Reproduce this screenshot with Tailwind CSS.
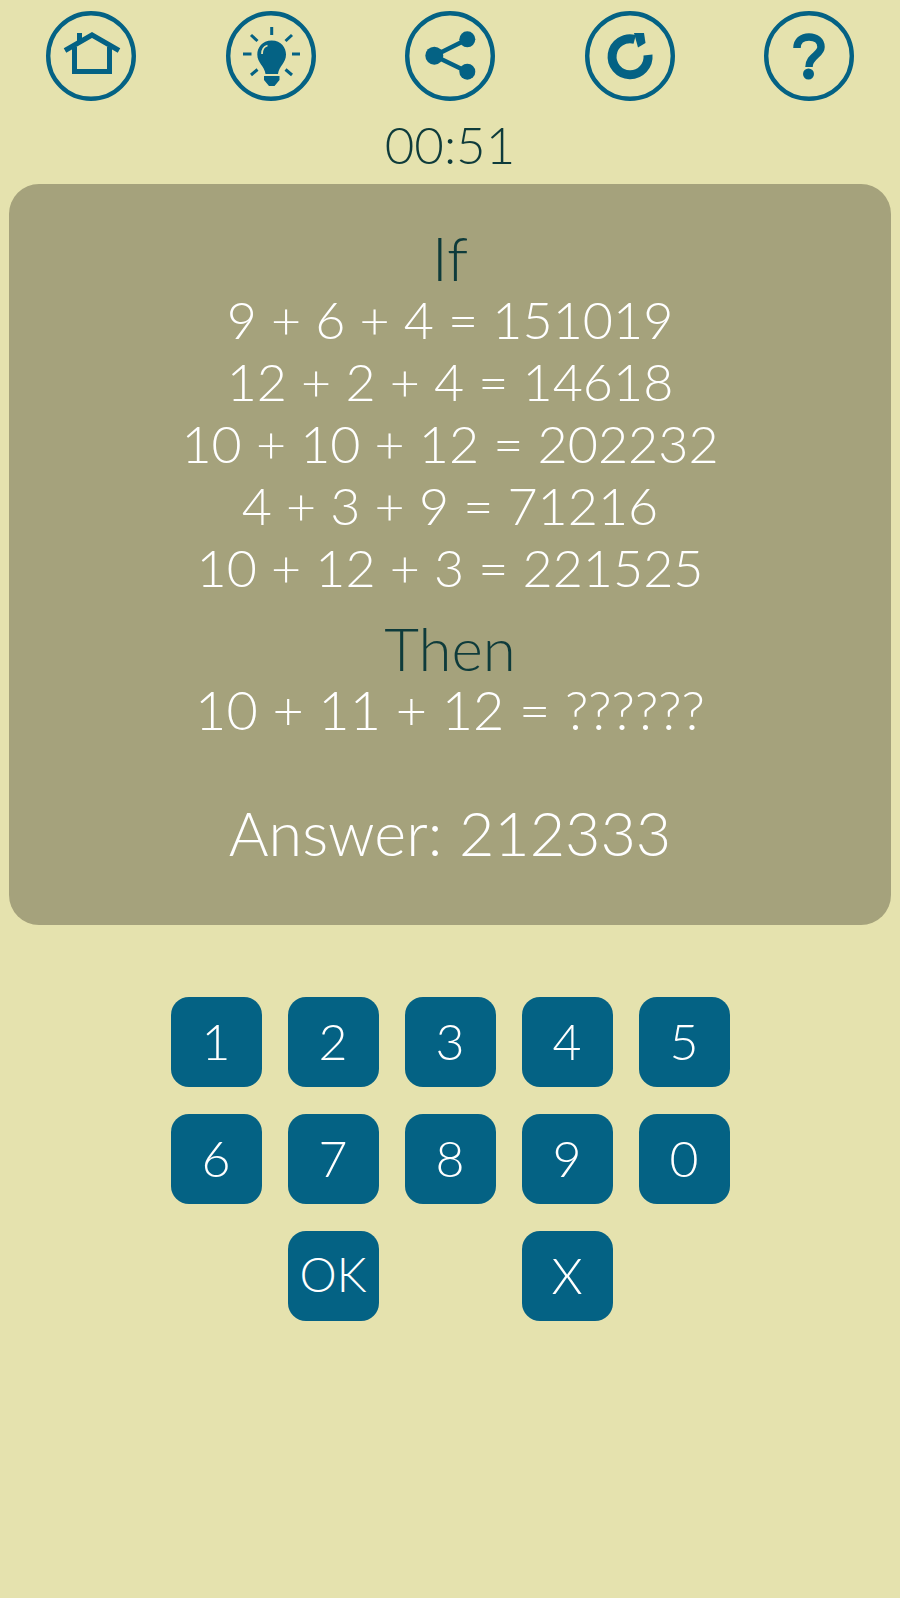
<!doctype html>
<html><head><meta charset="utf-8"><script src="https://cdn.jsdelivr.net/npm/@tailwindcss/browser@4"></script></head>
<body class="m-0">
<div class="w-[900px] h-[1598px] overflow-hidden bg-[#e5e2ae] font-['Lato',sans-serif] font-light">
  <div class="flex justify-between px-[46px] pt-[11px]">
    <svg class="w-[90px] h-[90px]" viewBox="0 0 90 90" fill="none" stroke="#046284"><circle cx="45" cy="45" r="42.8" stroke-width="4.4"/><path d="M19 39.5 L46 24 L73 39.5" stroke-width="5"/><path d="M28.5 36 V60.5 H63.5 V36" stroke-width="5"/><path d="M33.5 22 V31" stroke-width="5"/></svg>
    <svg class="w-[90px] h-[90px]" viewBox="0 0 90 90" fill="none" stroke="#046284"><circle cx="45" cy="45" r="42.8" stroke-width="4.4"/><path stroke-width="3" d="M45.7 16V24M17 43H25.5M66 43H74M25 24L31.5 30M66 24L59.5 30M25 64L31.5 58.5M66 64L59.5 58.5"/><path fill="#046284" stroke="none" d="M45.7 29.5C36 29.5 31.3 37 31.3 43.5C31.3 52 38.5 55 39.5 63H52C53 55 60 52 60 43.5C60 37 55.4 29.5 45.7 29.5ZM38 65H53.5V69L48.5 75H43L38 69Z"/><path d="M36 43C36 38 38 35.5 41.5 34.5" stroke="#e5e2ae" stroke-width="1.8"/></svg>
    <svg class="w-[90px] h-[90px]" viewBox="0 0 90 90" fill="none" stroke="#046284"><circle cx="45" cy="45" r="42.8" stroke-width="4.4"/><path d="M29.3 44.7L62.3 28.3M29.3 44.7L62.3 60.7" stroke-width="4.5"/><g fill="#046284" stroke="none"><circle cx="29.3" cy="44.7" r="9"/><circle cx="62.3" cy="28.3" r="8"/><circle cx="62.3" cy="60.7" r="8"/></g></svg>
    <svg class="w-[90px] h-[90px]" viewBox="0 0 90 90" fill="none" stroke="#046284"><circle cx="45" cy="45" r="42.8" stroke-width="4.4"/><path d="M63 44A18 18 0 1 1 49.7 28.3" stroke-width="9"/><path fill="#046284" stroke="none" d="M49 22L59 22L60.5 32L53 36.5Z"/></svg>
    <svg class="w-[90px] h-[90px]" viewBox="0 0 90 90" fill="none" stroke="#046284"><circle cx="45" cy="45" r="42.8" stroke-width="4.4"/><path d="M33 37C33 30 38 26 45 26C52 26 57 30 57 36C57 44 45 45 45 56" stroke-width="7.5"/><circle cx="44.5" cy="63" r="5.5" fill="#046284" stroke="none"/></svg>
  </div>
  <div class="h-[83px] pt-[13px] text-center text-[51px] leading-[62px] text-[#0e3b3b]">00:51</div>
  <div class="mx-[9px] h-[741px] rounded-[30px] bg-[#a5a27c] text-center text-white text-[52px] leading-[62px] pt-[42px]">
    <div class="text-[#0e3b3b] text-[62px]">If</div>
    <div>9 + 6 + 4 = 151019</div>
    <div>12 + 2 + 4 = 14618</div>
    <div>10 + 10 + 12 = 202232</div>
    <div>4 + 3 + 9 = 71216</div>
    <div>10 + 12 + 3 = 221525</div>
    <div class="text-[#0e3b3b] mt-[19px] text-[60px]">Then</div>
    <div class="text-[54px]">10 + 11 + 12 = ??????</div>
    <div class="mt-[61px] text-[61px]">Answer: 212333</div>
  </div>
  <div class="grid grid-cols-[repeat(5,91px)] gap-x-[26px] gap-y-[27px] justify-center mt-[72px] text-white text-[50px] leading-none">
    <div class="h-[90px] pb-[3px] rounded-[18px] bg-[#046284] flex items-center justify-center">1</div>
    <div class="h-[90px] pb-[3px] rounded-[18px] bg-[#046284] flex items-center justify-center">2</div>
    <div class="h-[90px] pb-[3px] rounded-[18px] bg-[#046284] flex items-center justify-center">3</div>
    <div class="h-[90px] pb-[3px] rounded-[18px] bg-[#046284] flex items-center justify-center">4</div>
    <div class="h-[90px] pb-[3px] rounded-[18px] bg-[#046284] flex items-center justify-center">5</div>
    <div class="h-[90px] pb-[3px] rounded-[18px] bg-[#046284] flex items-center justify-center">6</div>
    <div class="h-[90px] pb-[3px] rounded-[18px] bg-[#046284] flex items-center justify-center">7</div>
    <div class="h-[90px] pb-[3px] rounded-[18px] bg-[#046284] flex items-center justify-center">8</div>
    <div class="h-[90px] pb-[3px] rounded-[18px] bg-[#046284] flex items-center justify-center">9</div>
    <div class="h-[90px] pb-[3px] rounded-[18px] bg-[#046284] flex items-center justify-center">0</div>
    <div class="col-start-2 h-[90px] pb-[3px] rounded-[18px] bg-[#046284] flex items-center justify-center text-[47px]">OK</div>
    <div class="col-start-4 h-[90px] pb-[3px] rounded-[18px] bg-[#046284] flex items-center justify-center">X</div>
  </div>
</div>
</body></html>
